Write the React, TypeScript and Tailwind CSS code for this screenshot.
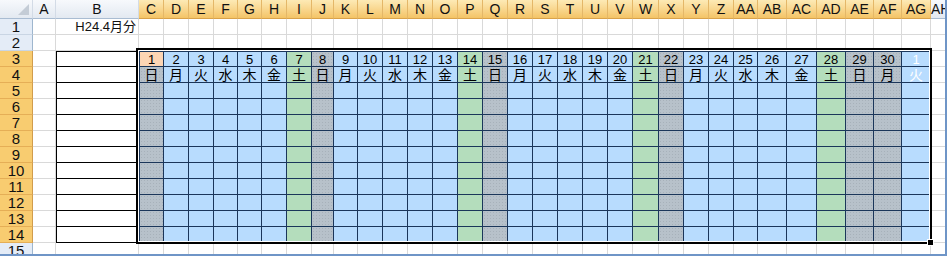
import React from 'react';

const LETTERS = [
  'A', 'B', 'C', 'D', 'E', 'F', 'G', 'H', 'I', 'J', 'K', 'L', 'M', 'N', 'O', 'P', 'Q',
  'R', 'S', 'T', 'U', 'V', 'W', 'X', 'Y', 'Z', 'AA', 'AB', 'AC', 'AD', 'AE', 'AF', 'AG', 'AH',
];
const WEEK = ['日', '月', '火', '水', '木', '金', '土'];
const ROWS = Array.from({ length: 15 }, (_, i) => i + 1);

// C(2) 〜 AG(32) が表の範囲
const inTable = (c: number, r: number) => c >= 2 && c <= 32 && r >= 3 && r <= 14;
const selCol = (c: number) => c >= 2 && c <= 32;
const selRow = (r: number) => r >= 3 && r <= 14;

function dayFill(c: number) {
  const w = (c - 2) % 7;
  // 日曜と 4/30 (振替休日) はグレー
  if (w === 0 || c === 31)
    return 'bg-[#b7c1ca] bg-[radial-gradient(circle,#a7b1ba_0.5px,transparent_0.7px)] bg-[length:3px_3px]';
  if (w === 6) return 'bg-[#b4ddbc]';
  return 'bg-[#b8dcfe]';
}

function ColHeader({ c }: { c: number }) {
  const on = selCol(c);
  return (
    <div
      className={`flex items-center justify-center border-r border-b text-[14px] leading-none ${
        on
          ? 'bg-gradient-to-b from-[#fdeab5] to-[#f4c466] border-r-[#e4b768] border-b-[#d9a24a]'
          : 'bg-gradient-to-b from-[#f7f9fc] to-[#e3e9f1] border-r-[#d3dbe6] border-b-[#a9bcd2]'
      }`}
    >
      {LETTERS[c]}
    </div>
  );
}

function RowHeader({ r }: { r: number }) {
  const on = selRow(r);
  return (
    <div
      className={`flex items-center justify-center border-r border-b text-[15px] leading-none ${
        on
          ? 'bg-[#f8cc70] border-r-[#d19c4c] border-b-[#e5ae56]'
          : 'bg-[#e4ecf7] border-r-[#9eb6ce] border-b-[#c9d5e4]'
      }`}
    >
      {r}
    </div>
  );
}

function Cell({ c, r }: { c: number; r: number }) {
  if (inTable(c, r)) {
    const d = c <= 31 ? c - 1 : 1;
    const w = WEEK[(c - 2) % 7];
    const first = c === 2 && r === 3;
    const last = c === 32;
    return (
      <div
        className={`flex items-center justify-center border-r border-b border-[#1b365a] leading-none ${
          r === 4 ? 'text-[14px]' : 'text-[13px]'
        } ${c === 2 ? 'border-l' : ''} ${r === 3 ? 'border-t' : ''} ${
          first ? 'bg-[#fcd5b4]' : dayFill(c)
        } ${last ? 'text-white' : 'text-black'}`}
      >
        {r === 3 ? d : r === 4 ? w : ''}
      </div>
    );
  }
  if (c === 1 && selRow(r)) {
    return (
      <div className={`border-l border-r border-b border-black ${r === 3 ? 'border-t' : ''}`} />
    );
  }
  if (c === 1 && r === 1) {
    return (
      <div className="flex items-center justify-end pr-[2px] border-r border-b border-[#d9d9d9] text-[13px] leading-none">
        H24.4月分
      </div>
    );
  }
  return <div className="border-r border-b border-[#d9d9d9]" />;
}

export default function App() {
  return (
    <div className="w-[947px] h-[256px] overflow-hidden bg-white border-r-2 border-b-2 border-[#6f95c7] font-['Liberation_Sans','Noto_Sans_CJK_JP',sans-serif] text-[#111]">
      <div className="relative grid grid-cols-[33px_23px_83px_25px_25px_25px_24px_24px_25px_25px_22px_24px_25px_25px_25px_25px_25px_25px_25px_25px_25px_25px_25px_26px_25px_25px_25px_24px_29px_30px_29px_28px_28px_29px_1fr] grid-rows-[19px_repeat(15,16px)]">
        {/* 左上の角 */}
        <div className="relative border-r border-b border-r-[#d3dbe6] border-b-[#a9bcd2] bg-gradient-to-b from-[#f7f9fc] to-[#e3e9f1]">
          <svg className="absolute right-[3px] bottom-[3px]" width="11" height="11" viewBox="0 0 11 11">
            <polygon points="11,0 11,11 0,11" fill="#c4ccd6" />
          </svg>
        </div>
        {LETTERS.map((_, c) => (
          <ColHeader key={c} c={c} />
        ))}

        {ROWS.map((r) => (
          <React.Fragment key={r}>
            <RowHeader r={r} />
            {LETTERS.map((_, c) => (
              <Cell key={c} c={c} r={r} />
            ))}
          </React.Fragment>
        ))}

        {/* 選択範囲の枠 */}
        <div className="absolute left-[136px] top-[48px] w-[796px] h-[196px] border-2 border-black pointer-events-none">
          <div className="w-full h-full border border-white" />
        </div>
        <div className="absolute left-[927px] top-[239px] w-[7px] h-[7px] bg-black border border-white" />
      </div>
    </div>
  );
}
